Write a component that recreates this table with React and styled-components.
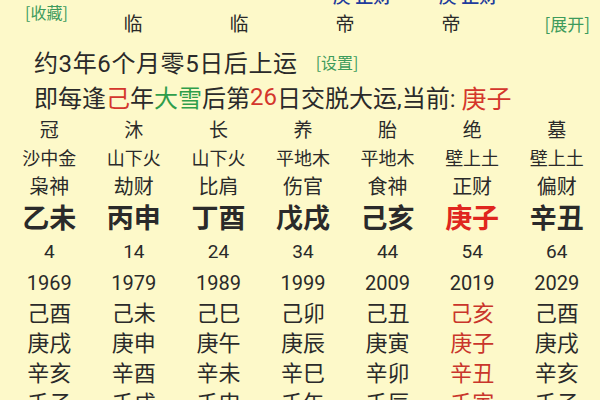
import React from 'react';
import styled, { createGlobalStyle } from 'styled-components';

const GlobalStyle = createGlobalStyle`
  html, body {
    margin: 0;
    padding: 0;
    background: #fdf9c9;
    overflow: hidden;
  }
  body {
    font-family: Roboto, "Noto Sans CJK SC", sans-serif;
    color: #2a2a2a;
  }
`;

const Page = styled.div`
  width: 600px;
  height: 400px;
  overflow: hidden;
  background: #fdf9c9;
`;

const PillarRow = styled.div`
  display: grid;
  grid-template-columns: 80px repeat(4, 106px) 1fr;
  align-items: end;
`;

const CutRow = styled(PillarRow)`
  margin-top: -12px;
  height: 18px;
  font-size: 18px;
  line-height: 18px;
  color: #1f3c9c;
  font-weight: 500;
`;

const HeadRow = styled(PillarRow)`
  height: 32px;
`;

const BlueCell = styled.div`
  grid-column: ${({ col }) => col};
  text-align: center;
  padding-left: 34px;
  white-space: nowrap;
`;

const HeadCell = styled.div`
  text-align: center;
  font-size: 19px;
  line-height: 24px;
  margin-bottom: 1px;
`;

const Link = styled.span`
  color: #3d9b5c;
  font-size: ${({ size }) => size || 16}px;
  font-family: "Noto Sans CJK SC", sans-serif;
  letter-spacing: 0;
`;

const Corner = styled.div`
  align-self: ${({ top }) => (top ? 'start' : 'end')};
  text-align: ${({ right }) => (right ? 'right' : 'left')};
  padding: ${({ right }) => (right ? '0 10px 2px 0' : '0 0 0 25px')};
  margin-top: ${({ top }) => (top ? '-4px' : '0')};
  line-height: 20px;
`;

const Line = styled.div`
  display: flex;
  align-items: center;
  gap: ${({ gap }) => gap || 0}px;
  padding-left: 34px;
  height: 35px;
  font-size: 24px;
  white-space: nowrap;
  letter-spacing: ${({ spread }) => spread || 0}px;
  margin-top: ${({ mt }) => mt || 0}px;
`;

const Red = styled.span`
  color: #d4362c;
  font-size: ${({ size }) => size || 24}px;
`;

const Green = styled.span`
  color: #2f9e4b;
`;

const Grid = styled.div`
  display: grid;
  grid-template-columns: repeat(7, 1fr);
  padding: 0 1px 0 7px;
  margin-top: 3px;
`;

const Column = styled.div`
  display: flex;
  flex-direction: column;
  align-items: center;
`;

const Cell = styled.div`
  height: ${({ h }) => h}px;
  line-height: ${({ h }) => h}px;
  font-size: ${({ size }) => size}px;
  font-weight: ${({ bold }) => (bold ? 700 : 400)};
  color: ${({ tone }) => (tone === 'hot' ? '#e0261e' : tone === 'red' ? '#c9352b' : '#2a2a2a')};
  white-space: nowrap;
`;

const dayun = [
  { stage: '冠', nayin: '沙中金', god: '枭神', gz: '乙未', age: 4, year: 1969, yrs: ['己酉', '庚戌', '辛亥', '壬子'] },
  { stage: '沐', nayin: '山下火', god: '劫财', gz: '丙申', age: 14, year: 1979, yrs: ['己未', '庚申', '辛酉', '壬戌'] },
  { stage: '长', nayin: '山下火', god: '比肩', gz: '丁酉', age: 24, year: 1989, yrs: ['己巳', '庚午', '辛未', '壬申'] },
  { stage: '养', nayin: '平地木', god: '伤官', gz: '戊戌', age: 34, year: 1999, yrs: ['己卯', '庚辰', '辛巳', '壬午'] },
  { stage: '胎', nayin: '平地木', god: '食神', gz: '己亥', age: 44, year: 2009, yrs: ['己丑', '庚寅', '辛卯', '壬辰'] },
  { stage: '绝', nayin: '壁上土', god: '正财', gz: '庚子', age: 54, year: 2019, yrs: ['己亥', '庚子', '辛丑', '壬寅'], current: true },
  { stage: '墓', nayin: '壁上土', god: '偏财', gz: '辛丑', age: 64, year: 2029, yrs: ['己酉', '庚戌', '辛亥', '壬子'] },
];

const App = () => {
  return (
    <Page>
      <GlobalStyle />
      <CutRow>
        <BlueCell col={4}>庚 正财</BlueCell>
        <BlueCell col={5}>庚 正财</BlueCell>
      </CutRow>
      <HeadRow>
        <Corner top>
          <Link size={16}>[收藏]</Link>
        </Corner>
        <HeadCell>临</HeadCell>
        <HeadCell>临</HeadCell>
        <HeadCell>帝</HeadCell>
        <HeadCell>帝</HeadCell>
        <Corner right>
          <Link size={17}>[展开]</Link>
        </Corner>
      </HeadRow>
      <Line mt={6} gap={18} spread={0.6}>
        <span>约3年6个月零5日后上运</span>
        <Link size={16}>[设置]</Link>
      </Line>
      <Line>
        即每逢<Red>己</Red>年<Green>大雪</Green>后第<Red>26</Red>日交脱大运,当前:&nbsp;<Red size={25}>庚子</Red>
      </Line>
      <Grid>
        {dayun.map((d) => (
          <Column key={d.year}>
            <Cell h={28} size={19}>{d.stage}</Cell>
            <Cell h={28} size={18}>{d.nayin}</Cell>
            <Cell h={28} size={20}>{d.god}</Cell>
            <Cell h={36} size={27} bold tone={d.current ? 'hot' : ''}>{d.gz}</Cell>
            <Cell h={30} size={19}>{d.age}</Cell>
            <Cell h={32} size={20}>{d.year}</Cell>
            {d.yrs.map((y, i) => (
              <Cell key={i} h={30} size={22} tone={d.current ? 'red' : ''}>{y}</Cell>
            ))}
          </Column>
        ))}
      </Grid>
    </Page>
  );
};

export default App;
